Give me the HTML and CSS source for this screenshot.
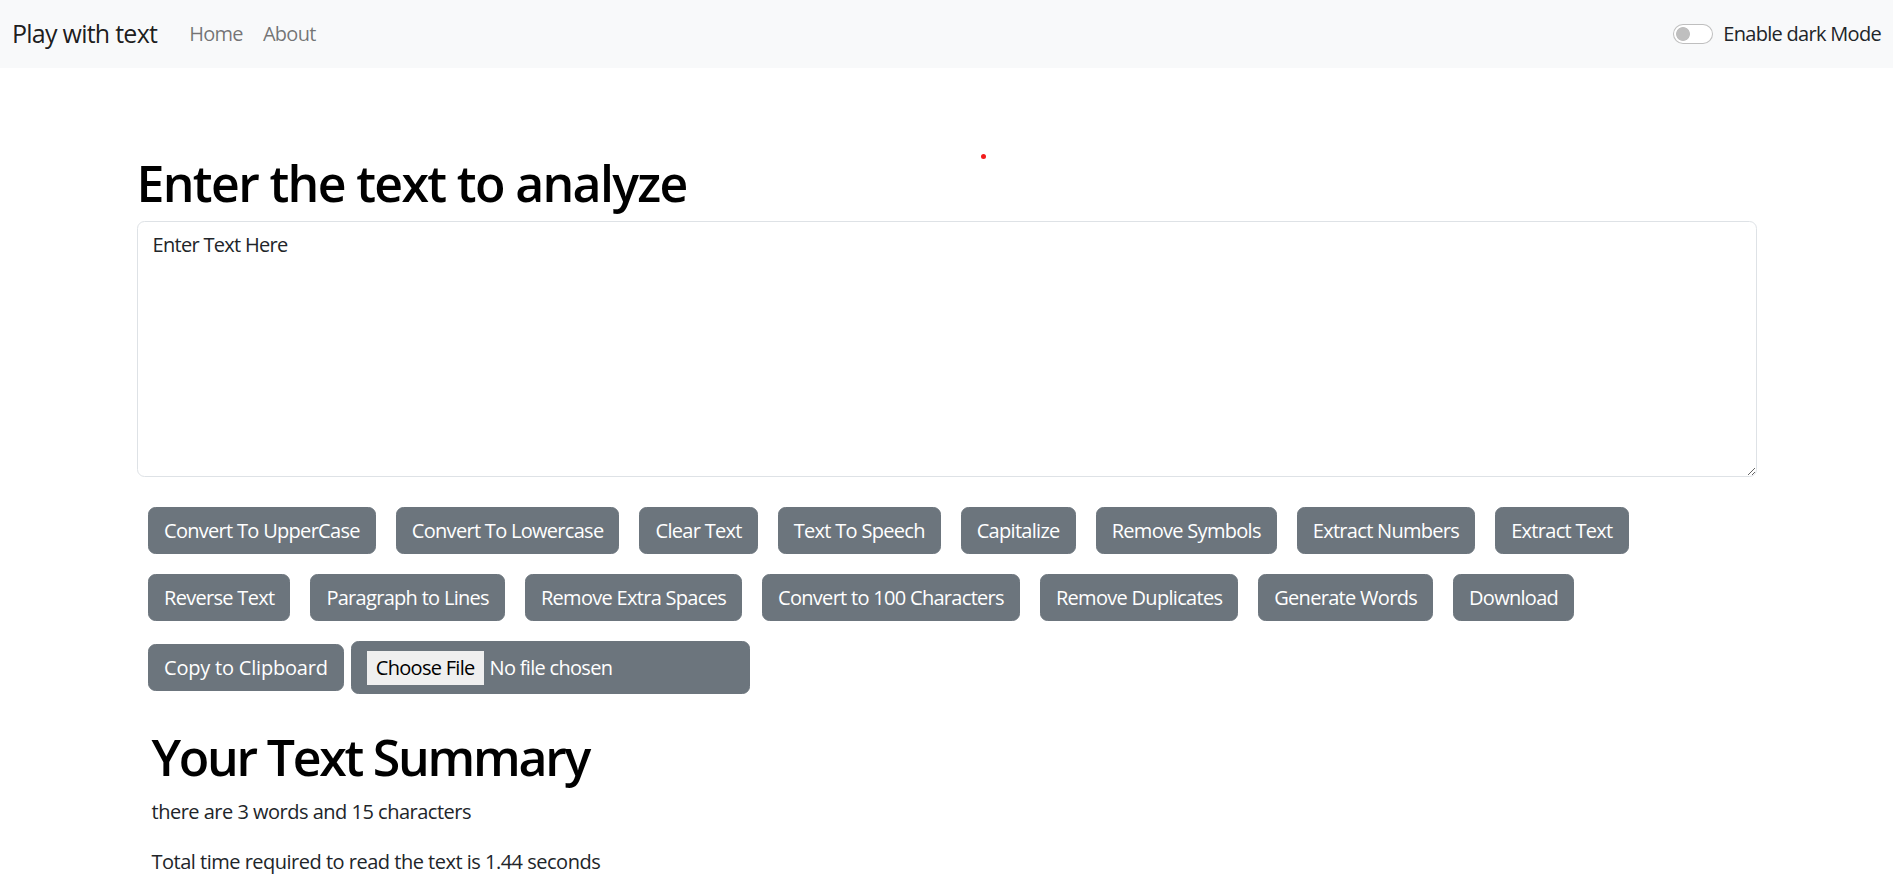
FILE: index.html
```html
<!DOCTYPE html>
<html lang="en">
<head>
<meta charset="utf-8">
<title>Play with text</title>
<link rel="stylesheet" href="styles.css">
</head>
<body>
<nav class="navbar">
  <a class="brand" href="#">Play with text</a>
  <ul class="nav-links">
    <li><a class="nav-link" href="#">Home</a></li>
    <li><a class="nav-link" href="#">About</a></li>
  </ul>
  <div class="switch">
    <input class="switch-input" type="checkbox" id="darkMode">
    <label class="switch-label" for="darkMode">Enable dark Mode</label>
  </div>
</nav>

<div class="alert-slot"><span class="dot"></span></div>

<main class="container">
  <h1 class="title">Enter the text to analyze</h1>
  <textarea class="text-box" rows="8">Enter Text Here</textarea>
  <div class="actions">
    <button class="btn">Convert To UpperCase</button>
    <button class="btn">Convert To Lowercase</button>
    <button class="btn">Clear Text</button>
    <button class="btn">Text To Speech</button>
    <button class="btn">Capitalize</button>
    <button class="btn">Remove Symbols</button>
    <button class="btn">Extract Numbers</button>
    <button class="btn">Extract Text</button>
    <button class="btn">Reverse Text</button>
    <button class="btn">Paragraph to Lines</button>
    <button class="btn">Remove Extra Spaces</button>
    <button class="btn">Convert to 100 Characters</button>
    <button class="btn">Remove Duplicates</button>
    <button class="btn">Generate Words</button>
    <button class="btn">Download</button>
    <button class="btn btn-wide">Copy to Clipboard</button>
    <input class="btn file-input" type="file">
  </div>

  <section class="summary">
    <h1 class="title summary-title">Your Text Summary</h1>
    <p class="line">there are 3 words and 15 characters</p>
    <p class="line">Total time required to read the text is 1.44 seconds</p>
  </section>
</main>
</body>
</html>
```

FILE: styles.css
```css
* { box-sizing: border-box; }

html, body { margin: 0; padding: 0; }

body {
  font-family: "Open Sans", "Noto Sans", sans-serif;
  font-size: 20px;
  line-height: 1.5;
  color: #212529;
  background: #fff;
  letter-spacing: -0.035em;
}

.navbar {
  display: flex;
  align-items: center;
  height: 68px;
  padding: 0 12px 0 12px;
  background: #f8f9fa;
}

.brand {
  font-size: 25px;
  line-height: 1.5;
  color: rgba(0, 0, 0, 0.9);
  text-decoration: none;
  margin-right: 22px;
  letter-spacing: -0.03em;
}

.nav-links {
  display: flex;
  list-style: none;
  margin: 0;
  padding: 0;
}

.nav-link {
  display: block;
  padding: 10px;
  color: rgba(0, 0, 0, 0.55);
  text-decoration: none;
}

.switch {
  margin-left: auto;
  display: flex;
  align-items: center;
}

.switch-input {
  appearance: none;
  -webkit-appearance: none;
  width: 40px;
  height: 20px;
  margin: 0 10px 0 0;
  border: 1px solid rgba(0, 0, 0, 0.25);
  border-radius: 20px;
  background: radial-gradient(circle at 9px 50%, #bfbfbf 6.5px, rgba(191,191,191,0) 7.3px) #fff;
}

.switch-label { color: #212529; }

.alert-slot {
  position: relative;
  height: 65px;
}

.dot {
  position: absolute;
  left: 981px;
  top: 86px;
  width: 5px;
  height: 5px;
  border-radius: 50%;
  background: #f21b1b;
}

.container {
  width: 1650px;
  margin: 20px auto;
  padding: 0 15px;
}

.title {
  font-size: 50px;
  font-weight: 600;
  line-height: 1.2;
  margin: 0 0 8px 0;
  color: #000;
  letter-spacing: -0.033em;
}

.text-box {
  display: block;
  width: 100%;
  height: 256px;
  margin: 0 0 20px 0;
  padding: 7.5px 15px;
  font: inherit;
  letter-spacing: inherit;
  line-height: 1.5;
  color: #212529;
  border: 1px solid #dee2e6;
  border-radius: 7.5px;
  resize: vertical;
}

.actions {
  display: flex;
  flex-wrap: wrap;
  align-items: baseline;
  padding-left: 1.5px;
}

.btn {
  font: inherit;
  letter-spacing: inherit;
  line-height: 1.5;
  color: #fff;
  background: #6c757d;
  border: 1px solid #6c757d;
  border-radius: 7.5px;
  padding: 7.5px 15px;
  margin: 10px;
}

.btn-wide {
  letter-spacing: -0.01em;
  margin-right: 7px;
}

.file-input {
  width: 399px;
  padding: 8.5px 15px;
  margin-left: 0;
  text-align: left;
}

.file-input::file-selector-button {
  font: inherit;
  letter-spacing: inherit;
  color: #000;
  background: #efefef;
  border: none;
  border-radius: 0;
  padding: 2px 9px;
  margin: 0 6px 0 0;
}

.summary {
  margin: 23px 0 20px 0;
  padding: 0 15px;
}

.summary-title {
  margin-bottom: 10px;
  letter-spacing: -0.045em;
}

.line {
  margin: 0 0 20px 0;
  letter-spacing: -0.025em;
}
```
